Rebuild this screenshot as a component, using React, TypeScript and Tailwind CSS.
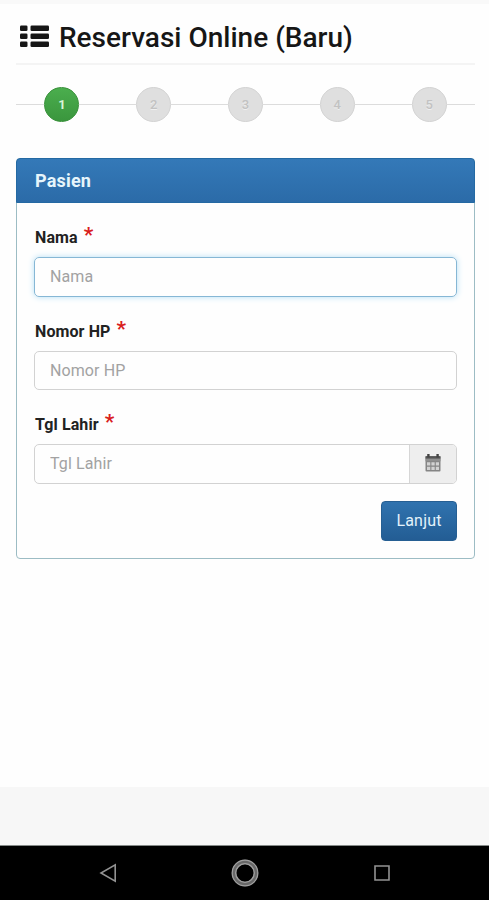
import React from "react";

const steps = [1, 2, 3, 4, 5];

const ListIcon = () => (
  <svg width="29" height="23" viewBox="0 0 29 23" fill="#161616">
    <rect x="0" y="0.5" width="7.5" height="5.5" rx="1.3" />
    <rect x="10.5" y="0.5" width="18.5" height="5.5" rx="1.3" />
    <rect x="0" y="8.5" width="7.5" height="5.5" rx="1.3" />
    <rect x="10.5" y="8.5" width="18.5" height="5.5" rx="1.3" />
    <rect x="0" y="16.5" width="7.5" height="5.5" rx="1.3" />
    <rect x="10.5" y="16.5" width="18.5" height="5.5" rx="1.3" />
  </svg>
);

const CalendarIcon = () => (
  <svg width="16" height="18" viewBox="0 0 16 18">
    <rect x="0.5" y="2" width="15" height="15.5" rx="1" fill="#858585" />
    <path d="M0.5 2.2h15v2.6h-15z" fill="#555" />
    <path d="M0.5 4.8h15v2.4h-15z" fill="#8f8f8f" />
    <path d="M2.2 0h2.4v3.5H2.2zM11.4 0h2.4v3.5h-2.4z" fill="#444" />
    <path
      d="M2 8.2h3.3v3.3H2zM6.4 8.2h3.3v3.3H6.4zM10.8 8.2H14v3.3h-3.2zM2 12.7h3.3V16H2zM6.4 12.7h3.3V16H6.4zM10.8 12.7H14V16h-3.2z"
      fill="#d2d2d2"
    />
  </svg>
);

const FieldLabel = ({ htmlFor, text }: { htmlFor: string; text: string }) => (
  <label
    htmlFor={htmlFor}
    className="flex h-[23px] pl-px text-base leading-[23px] font-bold tracking-[0.1px] text-[#222]"
  >
    {text}
    <span className="ml-1.5 -mt-0.5 text-[21px] leading-[23px] font-bold text-[#d9201c]">
      *
    </span>
  </label>
);

const App = () => {
  return (
    <div className="flex h-[900px] w-[489px] flex-col overflow-hidden bg-[#fefefe] font-['Roboto',sans-serif]">
      <div className="h-1 shrink-0 bg-[#f9f9f9]" />

      <main className="flex-1 pr-[14px] pl-4">
        <h1 className="flex h-[61px] items-center border-b-2 border-[#f4f4f4] pt-[5px] pl-1 text-[28px] font-medium text-[#161616]">
          <ListIcon />
          <span className="ml-[10px] pt-1 whitespace-nowrap">
            Reservasi Online (Baru)
          </span>
        </h1>

        <ol className="mt-[22px] flex">
          {steps.map((step) => (
            <li key={step} className="flex flex-1 items-center">
              <span className="h-px flex-1 bg-[#dcdcdc]" />
              <span
                className={
                  step === 1
                    ? "flex size-[35px] items-center justify-center rounded-full border border-[#369038] bg-linear-to-b from-[#4bae4e] to-[#3a963d] text-[13px] font-bold text-[#d9f5d8]"
                    : "flex size-[35px] items-center justify-center rounded-full border border-[#d3d3d3] bg-[#dfdfdf] text-[13px] font-medium text-[#c2c2c2] [text-shadow:0_1px_0_#f0f0f0]"
                }
              >
                {step}
              </span>
              <span className="h-px flex-1 bg-[#dcdcdc]" />
            </li>
          ))}
        </ol>

        <section className="mt-9 h-[401px] rounded-[4px] border border-[#9cbcc4]">
          <h2 className="-mx-px -mt-px flex h-[45px] items-center rounded-t-[4px] border border-[#2469a3] bg-linear-to-b from-[#3479b8] to-[#2b6ba8] px-[18px] text-lg font-bold tracking-[0.2px] text-[#e6f5fb]">
            Pasien
          </h2>

          <form className="px-[17px] pt-[23px]">
            <div className="mb-[23px]">
              <FieldLabel htmlFor="nama" text="Nama" />
              <input
                id="nama"
                placeholder="Nama"
                className="mt-2 block h-10 w-full rounded-[5px] border border-[#86b7d5] px-[15px] pb-0.5 text-base tracking-[0.1px] shadow-[0_0_6px_#b5dff5] outline-none placeholder:text-[#a2a2a2]"
              />
            </div>
            <div className="mb-[23px]">
              <FieldLabel htmlFor="hp" text="Nomor HP" />
              <input
                id="hp"
                placeholder="Nomor HP"
                className="mt-2 block h-[39px] w-full rounded-[5px] border border-[#d2d2d2] px-[15px] text-base tracking-[0.1px] outline-none placeholder:text-[#a2a2a2]"
              />
            </div>
            <div>
              <FieldLabel htmlFor="lahir" text="Tgl Lahir" />
              <div className="mt-2 flex h-10 overflow-hidden rounded-[5px] border border-[#d2d2d2]">
                <input
                  id="lahir"
                  placeholder="Tgl Lahir"
                  className="min-w-0 flex-1 px-[15px] text-base tracking-[0.1px] outline-none placeholder:text-[#a2a2a2]"
                />
                <span className="flex w-[47px] items-center justify-center border-l border-[#d6d6d6] bg-[#eeeeee] pb-0.5">
                  <CalendarIcon />
                </span>
              </div>
            </div>
            <div className="mt-[17px] flex justify-end">
              <button
                type="button"
                className="h-10 w-[76px] rounded-[4px] border border-[#265f93] bg-linear-to-b from-[#3073af] to-[#235d94] text-base tracking-[0.2px] text-[#e3f2fb]"
              >
                Lanjut
              </button>
            </div>
          </form>
        </section>
      </main>

      <footer className="h-[58px] shrink-0 bg-[#f7f7f7]" />

      <nav className="flex h-[55px] shrink-0 items-center border-t border-[#858a88] bg-black pr-[39px] pl-10">
        <div className="flex flex-1 justify-center">
          <svg width="18" height="20" viewBox="0 0 18 20" fill="none" stroke="#929292" strokeWidth="1.6">
            <path d="M16.2 1.8v16.4L2 10z" />
          </svg>
        </div>
        <div className="flex flex-1 justify-center">
          <svg width="28" height="28" viewBox="0 0 28 28" fill="none">
            <circle cx="14" cy="14" r="11" stroke="#686868" strokeWidth="4.5" />
            <circle cx="14" cy="14" r="12.8" stroke="#a0a0a0" strokeWidth="1.2" />
            <circle cx="14" cy="14" r="9.3" stroke="#a0a0a0" strokeWidth="1.3" />
          </svg>
        </div>
        <div className="flex flex-1 justify-center">
          <svg width="16" height="16" viewBox="0 0 16 16" fill="none" stroke="#929292" strokeWidth="1.6">
            <path d="M1 1h14v14H1z" />
          </svg>
        </div>
      </nav>
    </div>
  );
};

export default App;
